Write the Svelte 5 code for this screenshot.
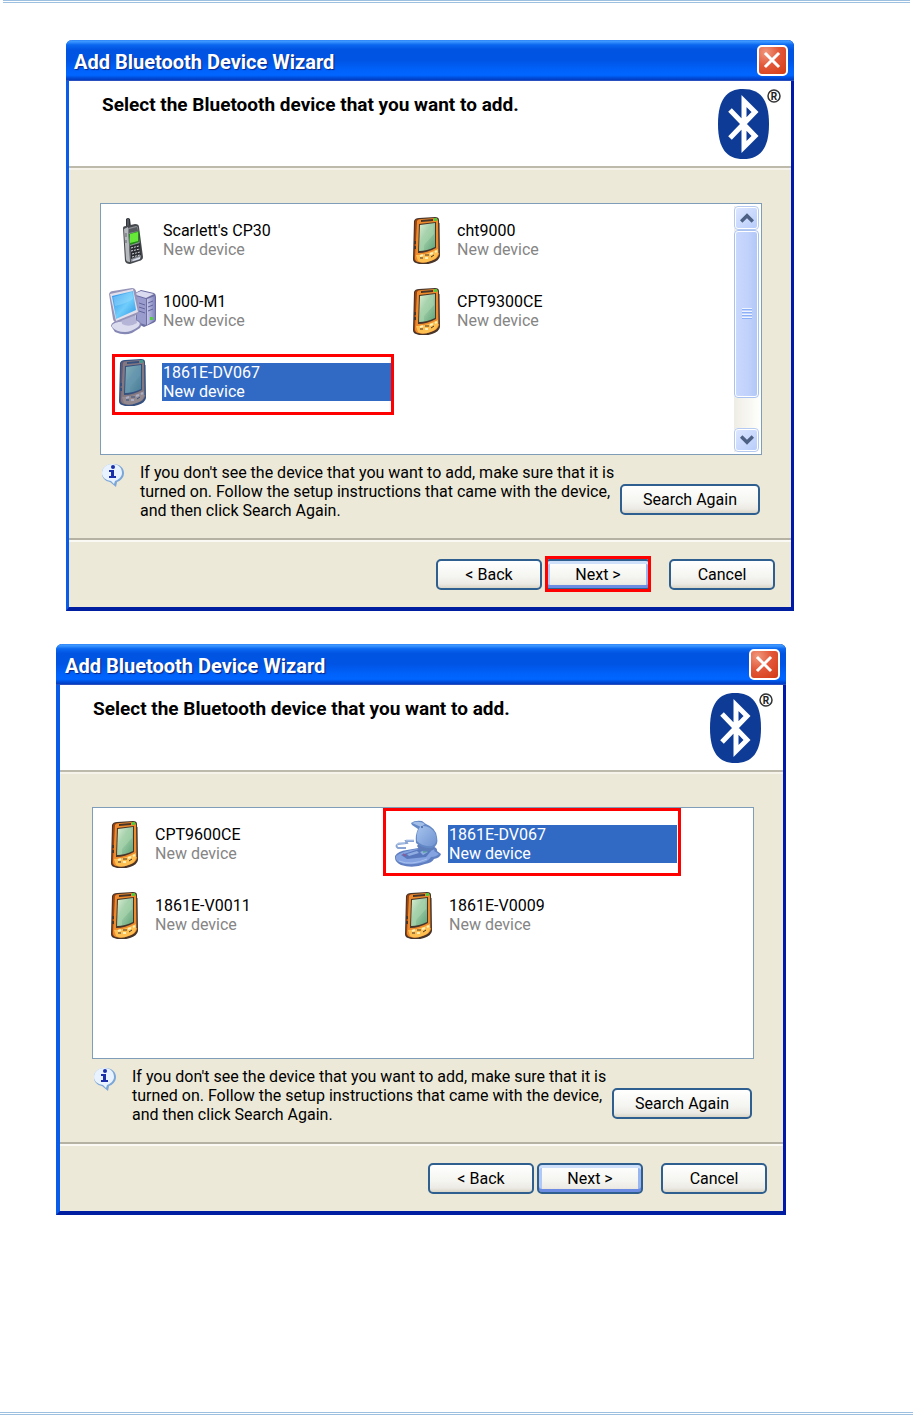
<script>
  const heading = 'Select the Bluetooth device that you want to add.';
  const wizards = [
    {
      id: 'first',
      scroll: true,
      markNext: true,
      devices: [
        { name: "Scarlett's CP30", icon: 'phone' },
        { name: 'cht9000', icon: 'pda' },
        { name: '1000-M1', icon: 'computer' },
        { name: 'CPT9300CE', icon: 'pda' },
        { name: '1861E-DV067', icon: 'pda', selected: true, mark: 'snug' }
      ]
    },
    {
      id: 'second',
      scroll: false,
      markNext: false,
      devices: [
        { name: 'CPT9600CE', icon: 'pda' },
        { name: '1861E-DV067', icon: 'dock', selected: true, mark: 'wide' },
        { name: '1861E-V0011', icon: 'pda' },
        { name: '1861E-V0009', icon: 'pda' }
      ]
    }
  ];
  const orange = { shell: '#ee8b2c', light: '#ffc052', dark: '#9c4312', edge: '#47352a', top: '#d8efd2', bottom: '#5da376', shine: '#a9d5ac', led: '#42d13a', key: '#fff0b8' };
  const blue = { shell: '#85777f', light: '#938a90', dark: '#5d5a78', edge: '#34507f', top: '#83aebc', bottom: '#477d98', shine: '#6798b3', led: '#3b9b8c', key: '#a8aec8' };
</script>

{#snippet pda(c, uid)}
  <svg class="icon" viewBox="0 0 48 48" aria-hidden="true">
    <defs>
      <linearGradient id={uid} x1="0" y1="0" x2="1" y2="1">
        <stop offset="0" stop-color={c.top} /><stop offset="1" stop-color={c.bottom} />
      </linearGradient>
    </defs>
    <path d="M12 5 Q13 2 17 2 L33 1 Q37 1 37 4 L38 40 Q37 45 30 47 Q21 50 14 47 Q11 46 11 43 Z" fill={c.edge} />
    <path d="M13 5 Q14 3 17 3 L19 4 L17 46 Q13 46 12 43 Z" fill={c.dark} />
    <path d="M15 5 Q16 3 20 3 L33 2 Q36 2 36 5 L37 38 Q36 43 29 45 Q21 48 16 46 Q13 45 13 42 Z" fill={c.shell} />
    <path d="M14 39 Q24 39 36 33 L36 38 Q35 43 28 45 Q21 48 16 45 Z" fill={c.light} />
    <path d="M19 4 L31 3 L31 5 L19 6 Z" fill={c.edge} />
    <path d="M17 8 L34 6 L34 32 Q25 37 16 37 Z" fill={c.edge} />
    <path d="M18 9 L33 7 L33 31 Q25 35 17 35 Z" fill="url(#{uid})" />
    <path d="M31 8 L32 18 L22 29 L22 34 L18 35 L19 23 Z" fill={c.shine} opacity="0.6" />
    <rect x="32" y="2" width="3" height="3" rx="1" fill={c.led} />
    <path d="M13 25v3M13 30v3" stroke={c.edge} stroke-width="2" />
    <path d="M18 40l3-1M23 42h3M28 38l3-1M33 36l2-1" stroke={c.key} stroke-width="2" />
    <path d="M18 42l3 0M23 39h4M29 41l3-2" stroke={c.edge} stroke-width="1" />
    <path d="M37 7 L37 37" stroke={c.edge} stroke-width="1" />
  </svg>
{/snippet}

{#snippet phone()}
  <svg class="icon" viewBox="0 0 48 48" aria-hidden="true">
    <path d="M18 3 Q20 1 22 3 L23 11 L18 12 Z" fill="#30343a" />
    <path d="M20 3v7" stroke="#777d84" />
    <path d="M15 12 Q15 10 18 10 L27 8 Q31 8 31 11 L35 41 Q35 44 31 45 L22 48 Q18 48 17 45 Z" fill="#45484d" />
    <path d="M16 13 L20 11 L22 46 Q18 46 18 43 Z" fill="#b6babe" />
    <path d="M20 12 L28 10 Q30 10 30 12 L33 41 Q33 43 30 44 L23 46 Z" fill="#8c9196" />
    <path d="M21 13 L29 11 L30 15 L21 17 Z" fill="#575b60" />
    <path d="M21 18 L31 15 L31 26 L22 29 Z" fill="#228c16" />
    <path d="M22 18 L30 16 L30 25 L22 27 Z" fill="#67e939" />
    <path d="M22 30 L32 27 L33 39 L23 43 Z" fill="#2b2d32" />
    <path d="M23 32l8-2M23 35l9-2M24 38l8-2M24 41l8-2" stroke="#d6dadd" stroke-dasharray="2 1" />
    <path d="M24 44 L32 41 L32 43 L25 45 Z" fill="#dddff0" />
    <path d="M18 17v4M18 24v3" stroke="#60646a" />
  </svg>
{/snippet}

{#snippet computer()}
  <svg class="icon" viewBox="0 0 48 48" aria-hidden="true">
    <defs>
      <linearGradient id="monitor" x1="0" y1="0" x2="1" y2="1">
        <stop offset="0" stop-color="#278be8" /><stop offset="0.55" stop-color="#70cdfb" /><stop offset="1" stop-color="#2894e5" />
      </linearGradient>
      <linearGradient id="tower" x1="0" y1="0" x2="1" y2="0">
        <stop offset="0" stop-color="#c4c5e6" /><stop offset="1" stop-color="#8083bd" />
      </linearGradient>
    </defs>
    <path d="M27 6 L33 3 L46 6 Q48 7 48 10 L48 33 Q48 35 45 36 L36 40 L28 36 Z" fill="#6c6ea2" />
    <path d="M28 6 L33 4 L46 7 L38 11 L28 8 Z" fill="#dcdcf1" />
    <path d="M28 9 L38 12 L38 38 L29 35 Z" fill="#9a9ccd" />
    <path d="M39 12 L47 9 L47 33 L39 38 Z" fill="url(#tower)" />
    <path d="M31 16l6 2M31 20l6 2M31 24l6 2M40 16l5-2M40 20l5-2M40 24l5-2" stroke="#62659c" />
    <rect x="42" y="30" width="3" height="3" fill="#50cf39" />
    <path d="M3 39 Q3 34 15 33 L30 33 Q35 36 32 41 L24 46 Q16 49 7 45 Z" fill="#8587b5" />
    <path d="M4 38 Q6 35 16 34 L29 34 Q34 36 30 40 Q23 45 17 45 Q8 45 4 40 Z" fill="#dcdcef" />
    <path d="M13 30 L27 27 L29 36 Q21 41 14 37 Z" fill="#b4b5d7" />
    <path d="M1 7 Q2 4 5 4 L24 1 Q27 1 28 4 L31 24 Q31 27 28 28 L10 35 Q6 36 5 32 Z" fill="#9694b8" />
    <path d="M2 7 L25 2 L30 25 L8 34 Z" fill="#e3e0eb" />
    <path d="M4 9 L25 4 L28 23 L8 32 Z" fill="url(#monitor)" />
    <path d="M5 10 L24 5 L25 12 Q17 17 7 19 Z" fill="#a4e3ff" opacity="0.4" />
  </svg>
{/snippet}

{#snippet dock()}
  <svg class="icon" viewBox="0 0 48 48" aria-hidden="true">
    <defs>
      <linearGradient id="dish" x1="0" y1="0" x2="1" y2="1">
        <stop offset="0" stop-color="#a6c4ef" /><stop offset="1" stop-color="#7093d0" />
      </linearGradient>
    </defs>
    <path d="M1 36 Q4 31 13 30 L36 26 Q44 27 43 31 L47 34 Q46 38 40 39 Q38 43 31 44 Q19 49 7 45 Q1 42 1 38 Z" fill="#5f7fc2" />
    <path d="M2 36 Q7 32 17 30 L36 27 Q42 29 40 31 L45 34 Q42 37 37 37 Q34 42 26 43 Q13 46 5 42 Q1 40 2 36 Z" fill="#84a3e0" />
    <path d="M7 35 L25 29 L37 31 L32 37 L13 39 Z" fill="#5877bd" />
    <path d="M13 34l10-3 2 2-10 3zM26 32l5-2 3 2-5 3z" fill="#90ade2" />
    <path d="M9 34l3 2" stroke="#8b5b94" stroke-width="2" /><path d="M29 32l4-1" stroke="#58a998" stroke-width="2" />
    <path d="M5 41 Q17 46 33 39" stroke="#a9c2f2" fill="none" />
    <path d="M20 21 L12 21 L13 23 L4 24 Q1 26 4 28 L12 28" stroke="#89a4d2" stroke-width="2" fill="none" />
    <path d="M20 20 L12 20 M11 23 L4 23 Q2 25 4 26" stroke="#bdd0ee" fill="none" />
    <path d="M23 26 L27 20 L37 22 L41 29 Q32 34 25 29 Z" fill="#5d7dbb" />
    <path d="M17 3 Q21 0 28 1 L32 4 Q42 8 43 17 Q45 26 38 28 Q28 29 22 23 Q21 15 24 9 L18 5 Z" fill="#6388c6" />
    <path d="M27 6 Q36 5 41 13 Q45 23 38 26 Q28 27 23 21 Q22 10 27 6 Z" fill="url(#dish)" />
    <path d="M18 3 Q25 0 31 4 L27 7 Z" fill="#a2bee7" />
    <circle cx="28" cy="7" r="1" fill="#45639c" />
  </svg>
{/snippet}

<svelte:head><title>Add Bluetooth Device Wizard</title></svelte:head>

<main class="page">
  <div class="rule top"></div>
  {#each wizards as w}
    <section class="window {w.id}" aria-labelledby="{w.id}-title">
      <header class="titlebar">
        <h1 id="{w.id}-title">Add Bluetooth Device Wizard</h1>
        <button class="close" aria-label="Close">
          <svg viewBox="0 0 27 27" aria-hidden="true"><path d="M7 7l12 12M19 7l-12 12" stroke="#fff" stroke-width="3" stroke-linecap="square" /></svg>
        </button>
      </header>
      <div class="banner">
        <h2>{heading}</h2>
        <svg class="logo" viewBox="0 0 63 70" role="img" aria-label="Bluetooth">
          <path d="M25 0 C42 0 51 10 51 35 C51 60 42 70 25 70 C9 70 0 60 0 35 C0 10 9 0 25 0 Z" fill="#0e3b96" />
          <path d="M12 21 L37 47 L26 58 V12 L37 23 L12 49" fill="none" stroke="#fff" stroke-width="5" stroke-miterlimit="8" />
          <circle cx="56" cy="7" r="6" fill="#fff" stroke="#333" stroke-width="1.5" />
          <text x="56" y="11" text-anchor="middle" font-size="10" font-weight="bold" fill="#222">R</text>
        </svg>
      </div>
      <div class="body">
        <div class="list">
          <ul>
            {#each w.devices as d, i}
              <li class:selected={d.selected}>
                {#if d.icon === 'phone'}{@render phone()}
                {:else if d.icon === 'computer'}{@render computer()}
                {:else if d.icon === 'dock'}{@render dock()}
                {:else}{@render pda(d.selected ? blue : orange, `${w.id}-${i}`)}{/if}
                <p class="label"><span>{d.name}</span><span class="state">New device</span></p>
                {#if d.mark}<i class="mark {d.mark}"></i>{/if}
              </li>
            {/each}
          </ul>
          {#if w.scroll}
            <div class="scrollbar">
              <button aria-label="Scroll up"><svg viewBox="0 0 12 8"><path d="M1 7l5-5 5 5" /></svg></button>
              <div class="thumb"><span></span></div>
              <button class="down" aria-label="Scroll down"><svg viewBox="0 0 12 8"><path d="M1 1l5 5 5-5" /></svg></button>
            </div>
          {/if}
        </div>
        <div class="help">
          <svg class="info" viewBox="0 0 24 24" aria-hidden="true">
            <path d="M12 1 C19 1 23 5 23 10 C23 15 19 18 16 19 L15 24 L9 19 C4 18 1 15 1 10 C1 5 5 1 12 1 Z" fill="#7ba6d8" />
            <path d="M11 1 C18 1 21 5 21 10 C21 14 17 17 14 18 L13 21 L10 18 C4 17 1 14 1 10 C1 5 5 1 11 1 Z" fill="#e8f3ff" />
            <path d="M8 7h5v6h2v2H8v-2h2V9H8z" fill="#1b2fa8" /><circle cx="12" cy="4" r="2" fill="#1b2fa8" />
          </svg>
          <p>If you don't see the device that you want to add, make sure that it is<br />turned on. Follow the setup instructions that came with the device,<br />and then click Search Again.</p>
          <button class="btn search">Search Again</button>
        </div>
      </div>
      <footer>
        <button class="btn">&lt; Back</button>
        <button class="btn next" class:marked={w.markNext}>Next &gt;</button>
        <button class="btn cancel">Cancel</button>
      </footer>
    </section>
  {/each}
  <div class="rule bottom"></div>
</main>

<style>
  :global(body) { margin: 0; background: #fff; }
  * { box-sizing: border-box; }
  .page {
    min-height: 100vh;
    display: flex;
    flex-direction: column;
    font-family: Roboto, "Liberation Sans", Arial, sans-serif;
    font-size: 16px;
    color: #000;
  }
  h1, h2, p, ul { margin: 0; padding: 0; font-weight: normal; }
  button { font: inherit; color: inherit; padding: 0; }
  .rule { height: 3px; border: solid #9dbfe0; border-width: 1px 0; }
  .rule.top { margin: 0 3px; }
  .rule.bottom { margin-top: auto; }
  .window {
    background: #ece9d8;
    border: solid #0a5be8;
    border-width: 0 3px 4px;
    border-right-color: #0019ab;
    border-bottom-color: #001ea0;
    border-radius: 6px 6px 0 0;
  }
  .first { margin: 37px 119px 0 66px; }
  .second { margin: 33px 127px 0 56px; border-left-width: 4px; }
  .titlebar {
    height: 41px;
    margin: 0 -3px;
    padding: 0 6px 0 8px;
    display: flex;
    align-items: center;
    justify-content: space-between;
    border-radius: 6px 6px 0 0;
    border-bottom: 1px solid #2a50c0;
    background: linear-gradient(#2f86f7 0, #3c97ff 4%, #0b68f0 12%, #0054e1 24%, #0054e4 50%, #0062fb 75%, #0066ff 88%, #0047d3 96%, #003bc0);
  }
  .second .titlebar { margin-left: -4px; padding-left: 9px; }
  h1 { font-size: 20px; line-height: 24px; font-weight: bold; color: #fff; text-shadow: 1px 1px 1px #0a2483; padding-top: 3px; }
  .close {
    width: 31px;
    height: 31px;
    border: 2px solid #fff;
    border-radius: 5px;
    background: radial-gradient(circle at 25% 20%, #f0987c, #e2583a 45%, #d33b12);
  }
  .close svg { display: block; width: 27px; height: 27px; }
  .banner {
    height: 85px;
    background: #fff;
    padding: 8px 10px 0 33px;
    display: flex;
    justify-content: space-between;
  }
  h2 { font-size: 19px; line-height: 20px; padding-top: 6px; font-weight: bold; }
  .logo { width: 63px; height: 70px; flex: none; }
  .body { border-top: 2px solid #bdb9ab; box-shadow: inset 0 2px #f5f3ea; padding: 35px 29px 18px 31px; }
  .second .body { padding-left: 32px; }
  .list { height: 252px; background: #fff; border: 1px solid #7f9db9; display: flex; justify-content: space-between; padding: 2px; }
  ul { list-style: none; display: grid; grid-template-columns: 294px 294px; grid-auto-rows: 48px; row-gap: 23px; padding-top: 10px; margin-left: -2px; }
  li { position: relative; display: flex; align-items: center; padding: 0 4px 0 7px; gap: 6px; }
  .icon { width: 48px; height: 48px; flex: none; }
  .label { flex: 1; line-height: 19px; padding-left: 1px; white-space: nowrap; }
  .label span { display: block; }
  .state { color: #858585; }
  .selected .label { background: #316ac5; }
  .selected .label, .selected .state { color: #fff; }
  .mark { position: absolute; border: 3px solid #f00; }
  .snug { inset: -4px 1px -9px 11px; }
  .wide { inset: -12px 0 -8px -4px; }
  .scrollbar { width: 25px; background: linear-gradient(90deg, #eeede5, #fefefb); display: flex; flex-direction: column; }
  .scrollbar button {
    height: 24px;
    border: 2px solid #fff;
    outline: 1px solid #b5caf0;
    outline-offset: -1px;
    border-radius: 4px;
    background: linear-gradient(135deg, #dce6ff, #b8cdfb);
    display: grid;
    place-items: center;
  }
  .scrollbar svg { width: 14px; height: 10px; }
  .scrollbar path { fill: none; stroke: #4d6185; stroke-width: 3; }
  .thumb {
    height: 168px;
    border: 2px solid #fff;
    outline: 1px solid #a9c2ef;
    outline-offset: -1px;
    border-radius: 4px;
    background: linear-gradient(90deg, #c9d8fc, #c0d1fb 60%, #b2c8f7);
    display: grid;
    place-items: center;
  }
  .thumb span { width: 10px; height: 12px; background: repeating-linear-gradient(#eef4ff 0 1px, #8cb0f8 1px 2px, transparent 2px 3px); }
  .scrollbar .down { margin-top: auto; }
  .help { display: flex; padding: 8px 2px 0 1px; }
  .info { width: 24px; height: 24px; flex: none; }
  .help p { line-height: 19px; padding-left: 15px; flex: 1; white-space: nowrap; }
  .btn {
    width: 106px;
    height: 31px;
    border: 2px solid #2f5f8f;
    border-radius: 5px;
    background: linear-gradient(#fff, #f4f4f0 60%, #eceae4 85%, #d9d5c9);
    flex: none;
  }
  .search { width: 140px; margin-top: 21px; }
  footer { border-top: 2px solid #b5b2a4; box-shadow: inset 0 2px #faf9f3; padding: 19px 16px 17px; display: flex; justify-content: flex-end; gap: 3px; }
  .next { box-shadow: inset 0 3px #cfe0fb, inset 0 -3px #6c8be3, inset 3px 0 #b0c8f5, inset -3px 0 #9ab6f0; }
  .marked { position: relative; }
  .marked::after { content: ""; position: absolute; inset: -5px -2px -4px; border: 3px solid #f00; }
  .cancel { margin-left: 15px; }
</style>
